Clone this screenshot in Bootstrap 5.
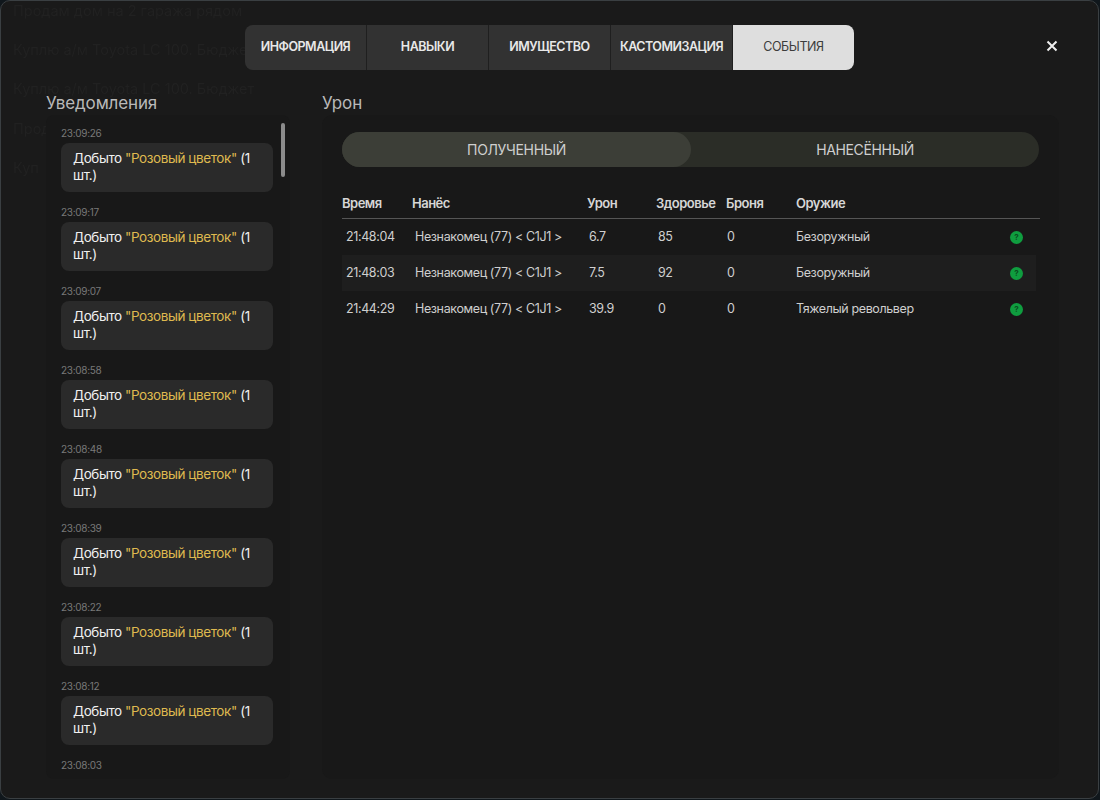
<!DOCTYPE html>
<html lang="ru">

<head>
    <meta charset="UTF-8">
    <meta name="viewport" content="width=device-width, initial-scale=1">
    <title>События</title>
    <link href="https://cdn.jsdelivr.net/npm/bootstrap@5.3.3/dist/css/bootstrap.min.css" rel="stylesheet">
    <style>
        html, body {
            height: 100%;
            overflow: hidden;
            background: #10171c;
        }

        body {
            font-family: Inter, "Noto Sans", "Liberation Sans", sans-serif;
            color: #e4e4e4;
        }

        .game-window {
            width: 1099px;
            height: 799px;
            background: #1a1a1a;
            border: 1px solid #3a3f42;
            border-radius: 10px;
            padding: 24px 39px 20px 45px;
            position: relative;
            overflow: hidden;
        }

        .ghost-text {
            position: absolute;
            left: 12px;
            top: -10px;
            color: #212121;
            font-size: 14.5px;
            line-height: 39.2px;
            filter: blur(.7px);
        }

        .tab-strip {
            width: 609px;
            height: 45px;
            margin-left: 199px;
        }

        .tab-item {
            flex: 1 1 0;
            background: #323232;
            color: #e8e8e8;
            font-size: 12.5px;
            font-weight: 600;
            letter-spacing: -.5px;
            border-right: 1px solid #1f1f1f;
            white-space: nowrap;
        }

        .tab-item:first-child {
            border-radius: 8px 0 0 8px;
        }

        .tab-item.tab-on {
            background: #dedede;
            color: #3c3c3c;
            font-weight: 400;
            letter-spacing: -.4px;
            border-right: 0;
            border-radius: 0 8px 8px 0;
        }

        .close-x {
            position: absolute;
            left: 1045px;
            top: 39px;
        }

        .panel-title {
            font-size: 17px;
            color: #b9b9b9;
            line-height: 22px;
            height: 22px;
            margin-bottom: 1px;
            letter-spacing: -.15px;
        }

        .main-area {
            margin-top: 22px;
            gap: 32px;
        }

        .left-side {
            width: 244px;
        }

        .right-side {
            width: 737px;
        }

        .notice-box {
            height: 664px;
            background: #181818;
            border-radius: 8px;
            padding: 12px 0 0 15px;
            position: relative;
            overflow: hidden;
        }

        .notice-bar {
            position: absolute;
            left: 235px;
            top: 8px;
            width: 4px;
            height: 54px;
            background: #8b8b8b;
            border-radius: 2px;
        }

        .notice-time {
            font-size: 10px;
            color: #787878;
            line-height: 12px;
            letter-spacing: -.3px;
            margin-bottom: 4px;
        }

        .notice-msg {
            width: 212px;
            height: 49px;
            background: #2a2a2a;
            border-radius: 8px;
            padding: 7px 12px;
            font-size: 13.5px;
            line-height: 17px;
            letter-spacing: -.42px;
            color: #f0f0f0;
            margin-bottom: 14px;
        }

        .notice-msg span {
            color: #dfb94f;
        }

        .damage-box {
            height: 664px;
            background: #181818;
            border-radius: 10px;
            padding: 17px 20px;
        }

        .switch-bar {
            height: 35px;
            background: #2b2d27;
            border-radius: 18px;
            color: #cfcfcf;
            font-size: 14px;
            letter-spacing: -.35px;
        }

        .switch-bar > div {
            flex: 1 1 0;
        }

        .switch-bar .switch-on {
            background: #3c3e37;
            border-radius: 18px;
            flex: 0 0 349px;
        }

        .dmg-table {
            margin-top: 23px;
            font-size: 12.5px;
            color: #cfcfcf;
            letter-spacing: -.38px;
        }

        .dmg-head {
            height: 29px;
            font-size: 13px;
            font-weight: 600;
            letter-spacing: -.5px;
            color: #d6d6d6;
            border-bottom: 1px solid #555;
            width: 698px;
        }

        .dmg-head .c-time { width: 70px; }
        .dmg-head .c-who { width: 175px; }
        .dmg-head .c-dmg { width: 69px; }
        .dmg-head .c-hp { width: 70px; }
        .dmg-head .c-arm { width: 70px; }

        .dmg-row {
            height: 36px;
            width: 694px;
            padding-left: 4px;
        }

        .dmg-row:nth-child(even) {
            background: #1e1e1e;
        }

        .c-time { width: 69px; }
        .c-who { width: 174px; }
        .c-dmg { width: 69px; }
        .c-hp { width: 69px; }
        .c-arm { width: 69px; }
        .c-gun { width: 214px; }

        .ok-dot {
            width: 13px;
            height: 13px;
            border-radius: 50%;
            background: #0f9d3f;
            color: #0a4d20;
            font-size: 8px;
            font-weight: 700;
            line-height: 13px;
            text-align: center;
            letter-spacing: 0;
        }
    </style>
</head>

<body>

    <div class="game-window">
        <div class="ghost-text">
            <div>Продам дом на 2 гаража рядом</div>
            <div>Куплю а/м Toyota LC 100. Бюджет</div>
            <div>Куплю а/м Toyota LC 100. Бюджет</div>
            <div>Прод</div>
            <div>Куп</div>
        </div>

        <div class="tab-strip d-flex position-relative">
            <div class="tab-item d-flex align-items-center justify-content-center">ИНФОРМАЦИЯ</div>
            <div class="tab-item d-flex align-items-center justify-content-center">НАВЫКИ</div>
            <div class="tab-item d-flex align-items-center justify-content-center">ИМУЩЕСТВО</div>
            <div class="tab-item d-flex align-items-center justify-content-center">КАСТОМИЗАЦИЯ</div>
            <div class="tab-item tab-on d-flex align-items-center justify-content-center">СОБЫТИЯ</div>
        </div>

        <svg class="close-x" width="12" height="12" viewBox="0 0 12 12">
            <path d="M1.5 1.5l9 9M10.5 1.5l-9 9" stroke="#eee" stroke-width="2" fill="none"/>
        </svg>

        <div class="main-area d-flex position-relative">
            <div class="left-side">
                <div class="panel-title">Уведомления</div>
                <div class="notice-box" id="notices">
                    <div class="notice-bar"></div>
                </div>
            </div>
            <div class="right-side">
                <div class="panel-title">Урон</div>
                <div class="damage-box">
                    <div class="switch-bar d-flex">
                        <div class="switch-on d-flex align-items-center justify-content-center">ПОЛУЧЕННЫЙ</div>
                        <div class="d-flex align-items-center justify-content-center">НАНЕСЁННЫЙ</div>
                    </div>
                    <div class="dmg-table">
                        <div class="dmg-head d-flex align-items-center">
                            <div class="c-time">Время</div>
                            <div class="c-who">Нанёс</div>
                            <div class="c-dmg">Урон</div>
                            <div class="c-hp">Здоровье</div>
                            <div class="c-arm">Броня</div>
                            <div class="c-gun">Оружие</div>
                        </div>
                        <div id="rows"></div>
                    </div>
                </div>
            </div>
        </div>
    </div>

    <script src="https://cdn.jsdelivr.net/npm/bootstrap@5.3.3/dist/js/bootstrap.bundle.min.js"></script>
    <script>
        const times = ['23:09:26', '23:09:17', '23:09:07', '23:08:58', '23:08:48', '23:08:39', '23:08:22', '23:08:12'];
        const box = document.getElementById('notices');
        times.forEach(t => {
            box.insertAdjacentHTML('beforeend',
                `<div class="notice-time">${t}</div><div class="notice-msg">Добыто <span>"Розовый цветок"</span> (1 шт.)</div>`);
        });
        box.insertAdjacentHTML('beforeend', '<div class="notice-time">23:08:03</div>');

        const rows = [
            ['21:48:04', '6.7', '85', 'Безоружный'],
            ['21:48:03', '7.5', '92', 'Безоружный'],
            ['21:44:29', '39.9', '0', 'Тяжелый револьвер']
        ];
        const rowsEl = document.getElementById('rows');
        rows.forEach(r => {
            rowsEl.insertAdjacentHTML('beforeend', `<div class="dmg-row d-flex align-items-center">
                <div class="c-time">${r[0]}</div>
                <div class="c-who">Незнакомец (77) &lt; C1J1 &gt;</div>
                <div class="c-dmg">${r[1]}</div>
                <div class="c-hp">${r[2]}</div>
                <div class="c-arm">0</div>
                <div class="c-gun">${r[3]}</div>
                <div class="ok-dot">?</div>
            </div>`);
        });
    </script>
</body>

</html>
